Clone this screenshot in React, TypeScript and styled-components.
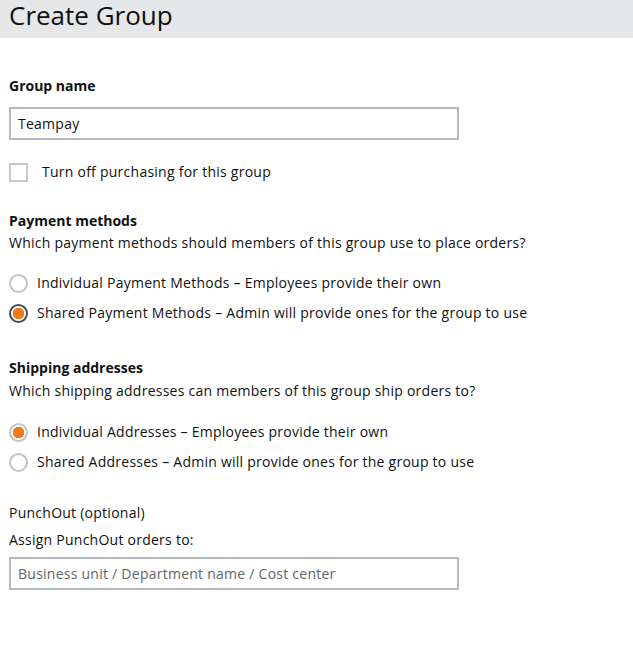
import React from "react";
import styled, { createGlobalStyle } from "styled-components";

const GlobalStyle = createGlobalStyle`
  html, body { margin: 0; padding: 0; background: #ffffff; }
  body {
    font-family: "Open Sans", "Noto Sans", Arial, sans-serif;
    color: #0f1111;
    -webkit-font-smoothing: antialiased;
  }
  * { box-sizing: border-box; }
`;

const Page = styled.div`
  width: 633px;
  min-height: 672px;
  background: #ffffff;
`;

const Header = styled.header`
  height: 38px;
  background: #e6e7e9;
  padding: 0 9px;
`;

const Title = styled.h1`
  margin: 0;
  font-size: 26px;
  font-weight: 400;
  line-height: 30px;
  color: #0f1111;
`;

const Form = styled.form`
  display: flex;
  flex-direction: column;
  padding: 38px 9px 0;
  font-size: 14px;
  line-height: 20px;
  letter-spacing: 0.25px;
`;

const Section = styled.section<{ $gap?: number }>`
  display: flex;
  flex-direction: column;
  margin-top: ${(p) => p.$gap ?? 0}px;
`;

const Label = styled.label<{ $bold?: boolean }>`
  font-weight: ${(p) => (p.$bold ? 700 : 400)};
  letter-spacing: ${(p) => (p.$bold ? 0 : 0.25)}px;
`;

const Hint = styled.p<{ $gap?: number }>`
  margin: ${(p) => p.$gap ?? 2}px 0 0;
`;

const TextInput = styled.input<{ $gap?: number }>`
  margin-top: ${(p) => p.$gap ?? 11}px;
  width: 450px;
  height: 33px;
  border: 2px solid #b6b9bc;
  border-radius: 0;
  padding: 0 7px;
  font: inherit;
  letter-spacing: 0.25px;
  color: #0f1111;
  outline: none;
  &::placeholder { color: #60656a; }
`;

const CheckRow = styled.label`
  display: flex;
  align-items: center;
  gap: 14px;
  margin-top: 22px;
  cursor: pointer;
`;

const Box = styled.input.attrs({ type: "checkbox" })`
  appearance: none;
  margin: 0;
  width: 19px;
  height: 19px;
  border: 2px solid #c5c8cb;
  background: #fff;
`;

const RadioList = styled.div<{ $gap: number }>`
  display: flex;
  flex-direction: column;
  gap: 10px;
  margin-top: ${(p) => p.$gap}px;
`;

const RadioRow = styled.label`
  display: flex;
  align-items: center;
  gap: 9px;
  cursor: pointer;
`;

const Dot = styled.input.attrs({ type: "radio" })<{ $focus?: boolean }>`
  appearance: none;
  margin: 0;
  width: 19px;
  height: 19px;
  border-radius: 50%;
  border: 2px solid ${(p) => (p.$focus ? "#4a4e52" : "#c1c4c7")};
  background: #fff;
  &:checked {
    background: radial-gradient(circle, #f3781a 0 5.5px, #ffffff 6px);
  }
`;

type Option = { id: string; text: string; checked?: boolean; focus?: boolean };

const RadioGroup = ({ name, options, gap }: { name: string; options: Option[]; gap: number }) => (
  <RadioList $gap={gap}>
    {options.map((o) => (
      <RadioRow key={o.id}>
        <Dot name={name} defaultChecked={o.checked} $focus={o.focus} />
        <span>{o.text}</span>
      </RadioRow>
    ))}
  </RadioList>
);

export default function App() {
  return (
    <Page>
      <GlobalStyle />
      <Header>
        <Title>Create Group</Title>
      </Header>
      <Form onSubmit={(e) => e.preventDefault()}>
        <Label $bold htmlFor="group-name">Group name</Label>
        <TextInput id="group-name" defaultValue="Teampay" />
        <CheckRow>
          <Box />
          <span>Turn off purchasing for this group</span>
        </CheckRow>

        <Section $gap={29}>
          <Label $bold>Payment methods</Label>
          <Hint>Which payment methods should members of this group use to place orders?</Hint>
          <RadioGroup
            name="payment"
            gap={20}
            options={[
              { id: "p1", text: "Individual Payment Methods – Employees provide their own" },
              { id: "p2", text: "Shared Payment Methods – Admin will provide ones for the group to use", checked: true, focus: true },
            ]}
          />
        </Section>

        <Section $gap={35}>
          <Label $bold>Shipping addresses</Label>
          <Hint $gap={3}>Which shipping addresses can members of this group ship orders to?</Hint>
          <RadioGroup
            name="shipping"
            gap={21}
            options={[
              { id: "s1", text: "Individual Addresses – Employees provide their own", checked: true },
              { id: "s2", text: "Shared Addresses – Admin will provide ones for the group to use" },
            ]}
          />
        </Section>

        <Section $gap={31}>
          <Label htmlFor="punchout">PunchOut (optional)</Label>
          <Hint $gap={7}>Assign PunchOut orders to:</Hint>
          <TextInput id="punchout" $gap={7} placeholder="Business unit / Department name / Cost center" />
        </Section>
      </Form>
    </Page>
  );
}
